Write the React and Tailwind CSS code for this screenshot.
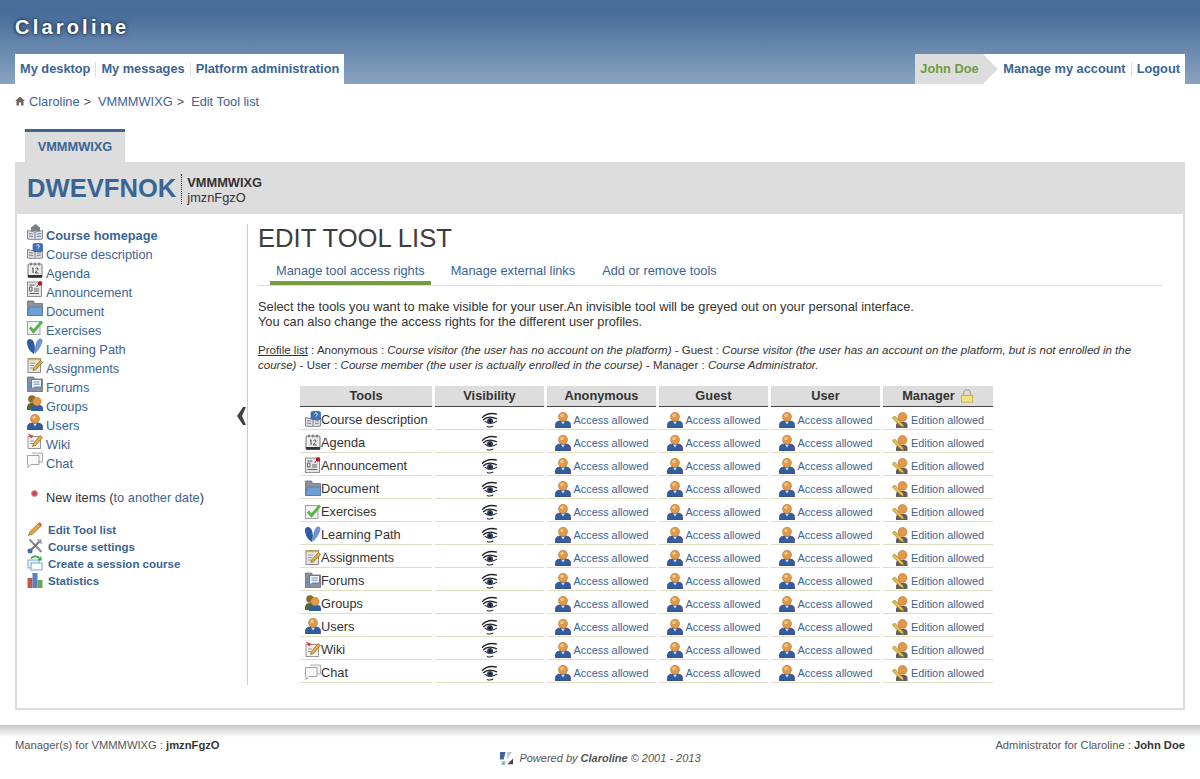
import React from "react";

// small hand drawn versions of the claroline icon set
const Svg = ({ children, className = "w-4 h-4" }) => (
  <svg viewBox="0 0 16 16" className={`${className} shrink-0`}>
    {children}
  </svg>
);

const UserIcon = () => (
  <Svg>
    <path d="M.5 16v-3.500C.5 10.500 2.500 9 5 9h6c2.500 0 4.500 1.500 4.500 3.500V16z" fill="#2f5f9e" stroke="#4a3a78" strokeWidth="0.7" />
    <path d="M6 9.500 8 12.500l2-3z" fill="#cfe0f2" />
    <circle cx="8" cy="4.800" r="4.500" fill="#e09a4a" stroke="#b9742c" strokeWidth="0.6" />
    <circle cx="7" cy="3.500" r="1.700" fill="#f3c690" />
  </Svg>
);

const ManagerIcon = () => (
  <Svg>
    <path d="M4 16v-3c0-2 2-3 4-3h4c2 0 3.500 1 3.500 3v3z" fill="#5c5f66" />
    <circle cx="10.500" cy="5" r="4.500" fill="#e09a4a" stroke="#b9742c" strokeWidth="0.6" />
    <path d="M.5 6 2.500 4 11 12.500 12 15.500 9 14.500z" fill="#f0c04a" stroke="#8a6a20" strokeWidth="0.7" />
  </Svg>
);

const EyeIcon = () => (
  <Svg className="w-[17px] h-[17px]">
    <path d="M1 6.500C4 3 9 1.500 15 3" fill="none" stroke="#222" strokeWidth="1.200" />
    <path d="M2 8.500C5 5.500 10 5 15 7.500" fill="none" stroke="#222" strokeWidth="1.300" />
    <path d="M3.500 9.500C6.500 12 11 12 15 9.500" fill="none" stroke="#222" strokeWidth="1" />
    <circle cx="8.500" cy="9.500" r="2.800" fill="#2b3f66" />
    <circle cx="8.500" cy="9.500" r="1" fill="#0d0d0d" />
    <path d="M5.500 14.500c2 .8 4 .8 6-.3" fill="none" stroke="#222" strokeWidth="1" />
  </Svg>
);

const BookBase = () => (
  <>
    <path d="M.5 6.500 8 8l7.500-1.500V15L8 16 .5 15z" fill="#d9dde3" stroke="#6b7480" strokeWidth="0.8" />
    <path d="M8 8v8" stroke="#6b7480" strokeWidth="0.8" />
    <path d="M2 9.500l4 .6M2 12l4 .6M10 10.100l4-.6M10 12.600l4-.6" stroke="#6b7480" strokeWidth="0.8" />
  </>
);

const HomeBookIcon = () => (
  <Svg>
    <BookBase />
    <path d="M4 7V3.500L8.500 0 13 3.500V7z" fill="#7d7f85" />
  </Svg>
);

const DescriptionIcon = () => (
  <Svg>
    <BookBase />
    <rect x="6" y="0.500" width="9.500" height="8" rx="1.500" fill="#3f73b5" stroke="#2b4f85" strokeWidth="0.6" />
    <path d="M9.500 2.500c1-1 2.800-.5 2.800.8 0 1-1.300 1.200-1.300 2.200" fill="none" stroke="#fff" strokeWidth="1" />
  </Svg>
);

const AgendaIcon = () => (
  <Svg>
    <rect x="1" y="2" width="14" height="13.500" rx="1" fill="#ececec" stroke="#555" strokeWidth="0.8" />
    <rect x="1" y="13" width="14" height="2.500" fill="#333" />
    <path d="M4 .500v3M8 .500v3M12 .500v3" stroke="#555" strokeWidth="1" />
    <path d="M5 6.500l1-.7V11M8.500 6.500c1-1 2.700-.6 2.500.8-.2 1-2.500 2-2.500 3.700H11.500" fill="none" stroke="#333" strokeWidth="0.9" />
  </Svg>
);

const AnnouncementIcon = () => (
  <Svg>
    <rect x="0.500" y="1" width="14" height="14.500" fill="#e4e4e4" stroke="#777" strokeWidth="0.8" />
    <path d="M2.500 4h5M2.500 6h2.500v4H2.500zM7 8h5M7 10h5M2.500 12.500h9.500" stroke="#666" strokeWidth="1" fill="none" />
    <path d="M9.500 6 12 3" stroke="#555" strokeWidth="1" />
    <circle cx="13" cy="2.500" r="2.200" fill="#b3192a" />
  </Svg>
);

const FolderIcon = () => (
  <Svg>
    <path d="M.5 1h6l1 2.500h8V15.500H.5z" fill="#8d939c" stroke="#5d636c" strokeWidth="0.7" />
    <path d="M.5 15.500 2.500 7h13v8.500z" fill="#6f9fd8" stroke="#4a74a8" strokeWidth="0.7" />
  </Svg>
);

const CheckIcon = () => (
  <Svg>
    <rect x="0.500" y="2.500" width="12.500" height="13" fill="#f2f2f2" stroke="#8d8d8d" strokeWidth="0.8" />
    <path d="M3 8.500 6.500 12.500 15 2.500" fill="none" stroke="#5bb14a" strokeWidth="2.800" />
  </Svg>
);

const PathIcon = () => (
  <Svg>
    <path d="M0 4C0 0 5 0 6.500 3.500 8 7 8.500 11 7 16 3 14 0 9 0 4z" fill="#2f5c9e" />
    <path d="M7.500 16C8 9 9 1 13 .5c3-.3 3 3 1.500 6C13 10 10 14 7.500 16z" fill="#6f97cc" />
  </Svg>
);

const AssignmentIcon = () => (
  <Svg>
    <rect x="1" y="1.500" width="12.500" height="14" fill="#e8e8e8" stroke="#6f6f6f" strokeWidth="0.8" />
    <path d="M1 1.500h12.500v1.800H1z" fill="#d7b13b" />
    <path d="M3 6h5M3 8.500h4M3 11h3" stroke="#8c8c8c" strokeWidth="0.9" />
    <path d="M6 13.500 6.500 11 13.500 3.500 15.500 5.500 8.500 13z" fill="#e9a73a" stroke="#77561a" strokeWidth="0.6" />
  </Svg>
);

const ForumIcon = () => (
  <Svg>
    <path d="M.5 1h6l1 2h8v12.500H.5z" fill="#8d939c" stroke="#5d636c" strokeWidth="0.7" />
    <rect x="1.500" y="5.500" width="2" height="9" fill="#5f8fcb" />
    <path d="M4.500 3.500h10v7.500h-7l-2.500 2.500V11h-.5z" fill="#eef3f9" stroke="#3f6fae" strokeWidth="0.8" />
    <path d="M6.500 6h6M6.500 8.200h6" stroke="#6d8fb8" strokeWidth="0.9" />
  </Svg>
);

const GroupIcon = () => (
  <Svg>
    <circle cx="5" cy="4" r="3.800" fill="#8a6a2c" />
    <path d="M0 13c0-4 2-5 5-5s4 1 4 4v3H0z" fill="#55692f" />
    <path d="M4 16v-2.500C4 11 6 10 8 10h4c2.500 0 4 1 4 3.500V16z" fill="#2f5f9e" />
    <circle cx="10" cy="6.500" r="4.200" fill="#e09a4a" stroke="#b9742c" strokeWidth="0.5" />
  </Svg>
);

const WikiIcon = () => (
  <Svg>
    <path d="M1 3.500h12.500v12H1z" fill="#f1f1f1" stroke="#7c7c7c" strokeWidth="0.8" />
    <path d="M.5 .5 7 3 4 5.500z" fill="#d7463a" />
    <path d="M3 8h4M3 10.500h3" stroke="#8c8c8c" strokeWidth="0.9" />
    <path d="M5.500 13.500 6.500 10.500 13 2.500 15.500 4.500 8.500 12.500z" fill="#f0ac3c" stroke="#77561a" strokeWidth="0.6" />
  </Svg>
);

const ChatIcon = () => (
  <Svg>
    <path d="M5 1h10.500v9H12" fill="#f3f3f3" stroke="#9a9a9a" strokeWidth="0.8" />
    <path d="M.5 3.500h11.500v9H4l-3 3v-3H.5z" fill="#f8f8f8" stroke="#8d8d8d" strokeWidth="0.8" />
  </Svg>
);

const HomeIcon = () => (
  <svg viewBox="0 0 10 10" className="w-[10px] h-[10px] shrink-0 mt-[1px]">
    <path d="M5 .5 10 5H8.500v4.500H6V6.500H4v3H1.500V5H0z" fill="#6f6660" />
  </svg>
);

const PencilIcon = () => (
  <Svg>
    <path d="M1.500 14.500 3 10.500 11.500 2.500 14 5 5.500 13z" fill="#eba33a" stroke="#8a5c1c" strokeWidth="0.7" />
    <path d="M11.500 2.500 12.800 1.200 15 3.500 14 5z" fill="#d1564a" />
  </Svg>
);

const ToolsIcon = () => (
  <Svg>
    <path d="M2.500 1.500 14.500 14" stroke="#8b8f95" strokeWidth="2.200" />
    <path d="M14 2 3 13" stroke="#6f7277" strokeWidth="2" />
    <circle cx="3" cy="13" r="2.500" fill="#3f6ea8" />
    <path d="M11 .5 15.500 5 14 6 10 2z" fill="#9b9fa5" />
  </Svg>
);

const SessionIcon = () => (
  <Svg>
    <rect x="1" y="5" width="11" height="8" fill="#eef4fb" stroke="#6f9bd0" strokeWidth="0.9" />
    <rect x="4" y="8" width="11" height="7" fill="#f8fbff" stroke="#6f9bd0" strokeWidth="0.9" />
    <path d="M4 3.500C6 1 10 .5 12.500 3.500" fill="none" stroke="#3fa34a" strokeWidth="1.800" />
    <path d="M10.500 5.500 15 5.500 14 1z" fill="#3fa34a" />
  </Svg>
);

const StatsIcon = () => (
  <Svg>
    <rect x="0.500" y="6" width="5" height="10" fill="#c9544c" />
    <rect x="5.500" y="1" width="5" height="15" fill="#4f83c6" />
    <rect x="10.500" y="8" width="5" height="8" fill="#6aa35a" />
  </Svg>
);

const LockIcon = () => (
  <Svg className="w-[14px] h-[14px]">
    <path d="M4 8V5a4 4 0 0 1 8 0v3" fill="none" stroke="#b0a98a" strokeWidth="1.600" />
    <rect x="1.500" y="7.500" width="13" height="7.500" fill="#f4e27a" stroke="#b9a33a" strokeWidth="0.8" />
  </Svg>
);

const LogoIcon = () => (
  <Svg className="w-[15px] h-[15px]">
    <path d="M1 1h6L5 9H1z" fill="#3f6595" />
    <path d="M9 1h5L8 9z" fill="#b7c5d6" />
    <path d="M9 14 15 8v6z" fill="#444" />
    <path d="M3 11h4l-1 4H3z" fill="#9aaec6" />
  </Svg>
);

const tools = [
  ["Course description", DescriptionIcon],
  ["Agenda", AgendaIcon],
  ["Announcement", AnnouncementIcon],
  ["Document", FolderIcon],
  ["Exercises", CheckIcon],
  ["Learning Path", PathIcon],
  ["Assignments", AssignmentIcon],
  ["Forums", ForumIcon],
  ["Groups", GroupIcon],
  ["Users", UserIcon],
  ["Wiki", WikiIcon],
  ["Chat", ChatIcon],
];

const courseLinks = [
  ["Edit Tool list", PencilIcon],
  ["Course settings", ToolsIcon],
  ["Create a session course", SessionIcon],
  ["Statistics", StatsIcon],
];

const Access = ({ icon: Icon, label }) => (
  <a href="#" className="flex items-center justify-center gap-[3px] text-[10.880px] text-[#3a6494]">
    <Icon />
    {label}
  </a>
);

const Sep = () => <span className="w-px h-[15px] bg-[#dddddd] mx-[5px]" />;

export default function App() {
  const thCls = "h-[21px] p-0 bg-[#dddddd] border-b border-[#444444] text-[12.800px] font-bold text-[#333333] text-center";
  const tdCls = "h-[23px] p-0 pb-[1px] align-bottom border-b border-[#dfe0c3]";

  return (
    <div className="h-[779px] overflow-hidden bg-white text-[#333333] font-['Liberation_Sans',Arial,sans-serif] text-[12.800px]">
      <header className="h-[84px] px-[15px] flex flex-col bg-gradient-to-b from-[#476d9b] from-[15%] to-[#8aa3bf]">
        <div className="h-[54px] pt-[15px] text-[20px] leading-[24px] font-bold tracking-[3.200px] text-white [text-shadow:0_0_5px_#1b2e4a,0_0_3px_#1b2e4a]">
          Claroline
        </div>
        <div className="h-[30px] flex justify-between font-bold text-[#3a6494]">
          <nav className="flex items-center px-[5px] bg-white">
            <a href="#">My desktop</a>
            <Sep />
            <a href="#">My messages</a>
            <Sep />
            <a href="#">Platform administration</a>
          </nav>
          <div className="flex items-center bg-white pr-[5px]">
            <div className="relative h-full w-[68px] pl-[5px] flex items-center bg-[#dddddd] text-[#6f9a43]">
              John Doe
              <span className="absolute left-full top-0 border-y-[15px] border-y-transparent border-l-[15px] border-l-[#dddddd]" />
            </div>
            <a href="#" className="ml-[20px]">Manage my account</a>
            <Sep />
            <a href="#">Logout</a>
          </div>
        </div>
      </header>

      <div className="h-[45px] pl-[15px] pt-[11px] flex items-start gap-[4px] text-[#3a6494] leading-[14px]">
        <HomeIcon />
        <a href="#">Claroline</a>
        <span className="text-[#555555] mr-[3px]">&gt;</span>
        <a href="#">VMMMWIXG</a>
        <span className="text-[#555555] mr-[3px]">&gt;</span>
        <a href="#">Edit Tool list</a>
      </div>

      <div className="px-[15px]">
        <div className="ml-[10px] w-[100px] h-[33px] border-t-[3px] border-[#3f6595] bg-[#dddddd] flex items-center justify-center font-bold text-[#3a6494]">
          VMMMWIXG
        </div>

        <div className="h-[52px] bg-[#dddddd] pl-[12px] flex items-center">
          <div className="text-[25.600px] leading-[30px] font-bold text-[#3a6494]">DWEVFNOK</div>
          <div className="mt-[2px] ml-[5px] pl-[5px] pt-[1px] h-[30px] border-l border-dotted border-[#222222] leading-[15px] text-[#333333]">
            <div className="font-bold">VMMMWIXG</div>
            <div>jmznFgzO</div>
          </div>
        </div>

        <div className="h-[496px] border-x-2 border-b-2 border-[#dddddd] pt-[10px] flex">
          <aside className="relative w-[231px] h-[461px] border-r border-[#cccccc] pl-[10px] shrink-0 text-[#3a6494]">
            <a href="#" className="h-[19px] flex items-end gap-[3px] font-bold">
              <span className="mb-[3px]"><HomeBookIcon /></span>
              <span className="leading-[14px]">Course homepage</span>
            </a>
            {tools.map(([name, Icon]) => (
              <a key={name} href="#" className="h-[19px] flex items-end gap-[3px]">
                <span className="mb-[3px]"><Icon /></span>
                <span className="leading-[14px]">{name}</span>
              </a>
            ))}
            <div className="mt-[17px] h-[19px] flex items-center text-[#333333]">
              <span className="ml-[4px] w-[7px] h-[7px] rounded-full bg-[#d9434e] border border-[#e58a90] -mt-[8px]" />
              <span className="ml-[8px]">
                New items (<a href="#" className="text-[#3a6494]">to another date</a>)
              </span>
            </div>
            <div className="mt-[13px] text-[11.500px] font-bold">
              {courseLinks.map(([name, Icon]) => (
                <a key={name} href="#" className="h-[17px] flex items-end gap-[5px]">
                  <Icon />
                  <span className="leading-[14px]">{name}</span>
                </a>
              ))}
            </div>
            <svg viewBox="0 0 10 18" className="absolute right-0 top-[183px] w-[10px] h-[18px]">
              <path d="M9 0 5 9l4 9H6L0 9l6-9z" fill="#444444" />
            </svg>
          </aside>

          <main className="flex-1 pl-[10px] pr-[20px]">
            <h1 className="text-[25.600px] leading-[28px] text-[#3d3d3d]">EDIT TOOL LIST</h1>
            <div className="mt-[5px] h-[29px] flex items-start border-b border-[#dddddd] text-[#3a6494]">
              <a href="#" className="ml-[12px] px-[6px] h-[28px] pt-[4px] border-b-[4px] border-[#769c3f]">
                Manage tool access rights
              </a>
              <a href="#" className="ml-[14px] px-[6px] pt-[4px]">Manage external links</a>
              <a href="#" className="ml-[15px] px-[6px] pt-[4px]">Add or remove tools</a>
            </div>
            <p className="mt-[13px] leading-[15px]">
              Select the tools you want to make visible for your user.An invisible tool will be greyed out on your personal interface.
              <br />
              You can also change the access rights for the different user profiles.
            </p>
            <p className="mt-[14px] text-[11.520px] leading-[15px]">
              <u>Profile list</u> : Anonymous : <i>Course visitor (the user has no account on the platform)</i> - Guest : <i>Course visitor (the user has an account on the platform, but is not enrolled in the course)</i> - User : <i>Course member (the user is actually enrolled in the course)</i> - Manager : <i>Course Administrator.</i>
            </p>
            <table className="mt-[13px] ml-[39px] border-separate border-spacing-x-[3px] border-spacing-y-0 table-fixed w-[699px]">
              <thead>
                <tr>
                  <th className={`${thCls} w-[132px]`}>Tools</th>
                  <th className={`${thCls} w-[109px]`}>Visibility</th>
                  <th className={`${thCls} w-[109px]`}>Anonymous</th>
                  <th className={`${thCls} w-[109px]`}>Guest</th>
                  <th className={`${thCls} w-[109px]`}>User</th>
                  <th className={`${thCls} w-[110px]`}>
                    <span className="inline-flex items-center gap-[5px]">Manager <LockIcon /></span>
                  </th>
                </tr>
              </thead>
              <tbody>
                {tools.map(([name, Icon]) => (
                  <tr key={name}>
                    <td className={tdCls}>
                      <div className="pl-[5px] -mb-[1px] flex items-center text-[#333333]">
                        <Icon />
                        {name}
                      </div>
                    </td>
                    <td className={tdCls}>
                      <div className="flex justify-center"><EyeIcon /></div>
                    </td>
                    <td className={tdCls}><Access icon={UserIcon} label="Access allowed" /></td>
                    <td className={tdCls}><Access icon={UserIcon} label="Access allowed" /></td>
                    <td className={tdCls}><Access icon={UserIcon} label="Access allowed" /></td>
                    <td className={tdCls}><Access icon={ManagerIcon} label="Edition allowed" /></td>
                  </tr>
                ))}
              </tbody>
            </table>
          </main>
        </div>
      </div>

      <footer className="mt-[15px] h-[54px] bg-gradient-to-b from-[#c8c8c8] to-white bg-[length:100%_12px] bg-no-repeat px-[15px] pt-[14px] text-[11.200px] text-[#555555] relative">
        <div className="flex justify-between leading-[13px]">
          <span>Manager(s) for VMMMWIXG : <b className="text-[#333333]">jmznFgzO</b></span>
          <span>Administrator for Claroline : <b className="text-[#333333]">John Doe</b></span>
        </div>
        <div className="mt-[-1px] flex justify-center items-center gap-[5px] italic text-[11px] leading-[13px]">
          <LogoIcon />
          <span>Powered by <b>Claroline</b> © 2001 - 2013</span>
        </div>
      </footer>
    </div>
  );
}
